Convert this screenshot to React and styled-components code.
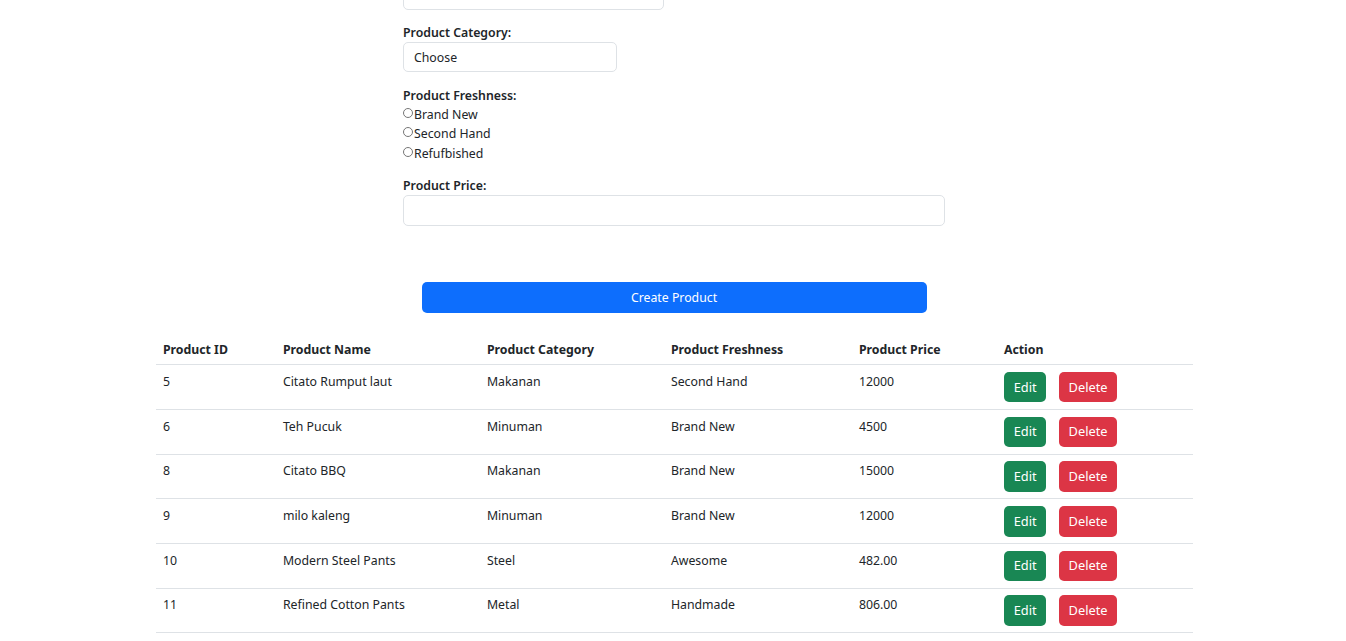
import React, { useState } from 'react';
import styled, { createGlobalStyle } from 'styled-components';

const GlobalStyle = createGlobalStyle`
    body {
        margin: 0;
        background: #fff;
        color: #212529;
        font-family: "Noto Sans", "Open Sans", sans-serif;
        font-size: 12.3px;
        line-height: 19.2px;
    }
    * { box-sizing: border-box; }
`;

const Page = styled.div`
    display: flex;
    flex-direction: column;
    align-items: center;
    padding-left: 2px;
`;

const Form = styled.form`
    width: 542px;
    display: flex;
    flex-direction: column;
`;

const FormGroup = styled.div`
    display: flex;
    flex-direction: column;
    align-items: flex-start;
    margin-bottom: ${p => p.$gap || '13px'};
`;

const Label = styled.label`
    font-weight: 600;
    color: #212529;
`;

const Input = styled.input`
    width: ${p => p.$width || '100%'};
    height: ${p => p.$height || '31px'};
    padding: 4px 10px;
    border: 1px solid #dee2e6;
    border-radius: 5px;
    font: inherit;
    color: #212529;
    background: #fff;
    outline: none;
`;

const Select = styled.select`
    width: 214px;
    height: 30px;
    padding: 0 10px;
    border: 1px solid #dee2e6;
    border-radius: 5px;
    font: inherit;
    color: #212529;
    background: #fff;
    appearance: none;
    outline: none;
`;

const RadioList = styled.div`
    display: flex;
    flex-direction: column;
    margin-top: -1px;
    margin-bottom: 1px;
`;

const RadioRow = styled.label`
    display: flex;
    align-items: center;
    height: 19.5px;
`;

const Radio = styled.input`
    appearance: none;
    width: 10px;
    height: 10px;
    margin: 0 1px 3px 0;
    border: 1px solid #767676;
    border-radius: 50%;
    background: #fff;
`;

const SubmitRow = styled.div`
    display: flex;
    justify-content: center;
    margin-top: 56px;
`;

const CreateButton = styled.button`
    width: 505px;
    height: 31px;
    border: none;
    border-radius: 5px;
    background: #0d6efd;
    color: #fff;
    font: inherit;
    cursor: pointer;
`;

const Table = styled.table`
    width: 1037px;
    margin-top: 20px;
    border-collapse: collapse;
    color: #212529;
`;

const Th = styled.th`
    text-align: left;
    font-weight: 700;
    padding: 6.4px 6.4px 5.6px 7.4px;
    width: ${p => p.$w};
    border-bottom: 1px solid #dee2e6;
`;

const Td = styled.td`
    padding: 6.7px 6.4px 6.5px 7.4px;
    vertical-align: top;
    border-bottom: 1px solid #dee2e6;
`;

const Actions = styled.div`
    display: flex;
    gap: 13px;
`;

const ActionButton = styled.button`
    height: 30.5px;
    padding: 0 ${p => (p.$danger ? '9.2px' : '9.8px')};
    border: none;
    border-radius: 5px;
    background: ${p => (p.$danger ? '#dc3545' : '#198754')};
    color: #fff;
    font: inherit;
    font-size: 12.8px;
    cursor: pointer;
`;

const products = [
    { id: 5, name: 'Citato Rumput laut', category: 'Makanan', freshness: 'Second Hand', price: '12000' },
    { id: 6, name: 'Teh Pucuk', category: 'Minuman', freshness: 'Brand New', price: '4500' },
    { id: 8, name: 'Citato BBQ', category: 'Makanan', freshness: 'Brand New', price: '15000' },
    { id: 9, name: 'milo kaleng', category: 'Minuman', freshness: 'Brand New', price: '12000' },
    { id: 10, name: 'Modern Steel Pants', category: 'Steel', freshness: 'Awesome', price: '482.00' },
    { id: 11, name: 'Refined Cotton Pants', category: 'Metal', freshness: 'Handmade', price: '806.00' },
];

const App = () => {
    const [price, setPrice] = useState('');

    return (
        <Page>
            <GlobalStyle />
            <Form onSubmit={e => e.preventDefault()}>
                <FormGroup style={{ marginTop: '-21px' }}>
                    <Input type="text" $width="261px" />
                </FormGroup>
                <FormGroup $gap="14px">
                    <Label htmlFor="category">Product Category:</Label>
                    <Select id="category" defaultValue="">
                        <option value="">Choose</option>
                        <option>Makanan</option>
                        <option>Minuman</option>
                    </Select>
                </FormGroup>
                <FormGroup $gap="12px">
                    <Label>Product Freshness:</Label>
                    <RadioList>
                        <RadioRow><Radio type="radio" name="fresh" />Brand New</RadioRow>
                        <RadioRow><Radio type="radio" name="fresh" />Second Hand</RadioRow>
                        <RadioRow><Radio type="radio" name="fresh" />Refufbished</RadioRow>
                    </RadioList>
                </FormGroup>
                <FormGroup $gap="0">
                    <Label htmlFor="price">Product Price:</Label>
                    <Input id="price" type="text" value={price} onChange={e => setPrice(e.target.value)} />
                </FormGroup>
                <SubmitRow>
                    <CreateButton type="submit">Create Product</CreateButton>
                </SubmitRow>
            </Form>
            <Table>
                <thead>
                    <tr>
                        <Th $w="120px">Product ID</Th>
                        <Th $w="204px">Product Name</Th>
                        <Th $w="184px">Product Category</Th>
                        <Th $w="188px">Product Freshness</Th>
                        <Th $w="145px">Product Price</Th>
                        <Th>Action</Th>
                    </tr>
                </thead>
                <tbody>
                    {products.map(p => (
                        <tr key={p.id}>
                            <Td>{p.id}</Td>
                            <Td>{p.name}</Td>
                            <Td>{p.category}</Td>
                            <Td>{p.freshness}</Td>
                            <Td>{p.price}</Td>
                            <Td>
                                <Actions>
                                    <ActionButton>Edit</ActionButton>
                                    <ActionButton $danger>Delete</ActionButton>
                                </Actions>
                            </Td>
                        </tr>
                    ))}
                </tbody>
            </Table>
        </Page>
    );
};

export default App;
